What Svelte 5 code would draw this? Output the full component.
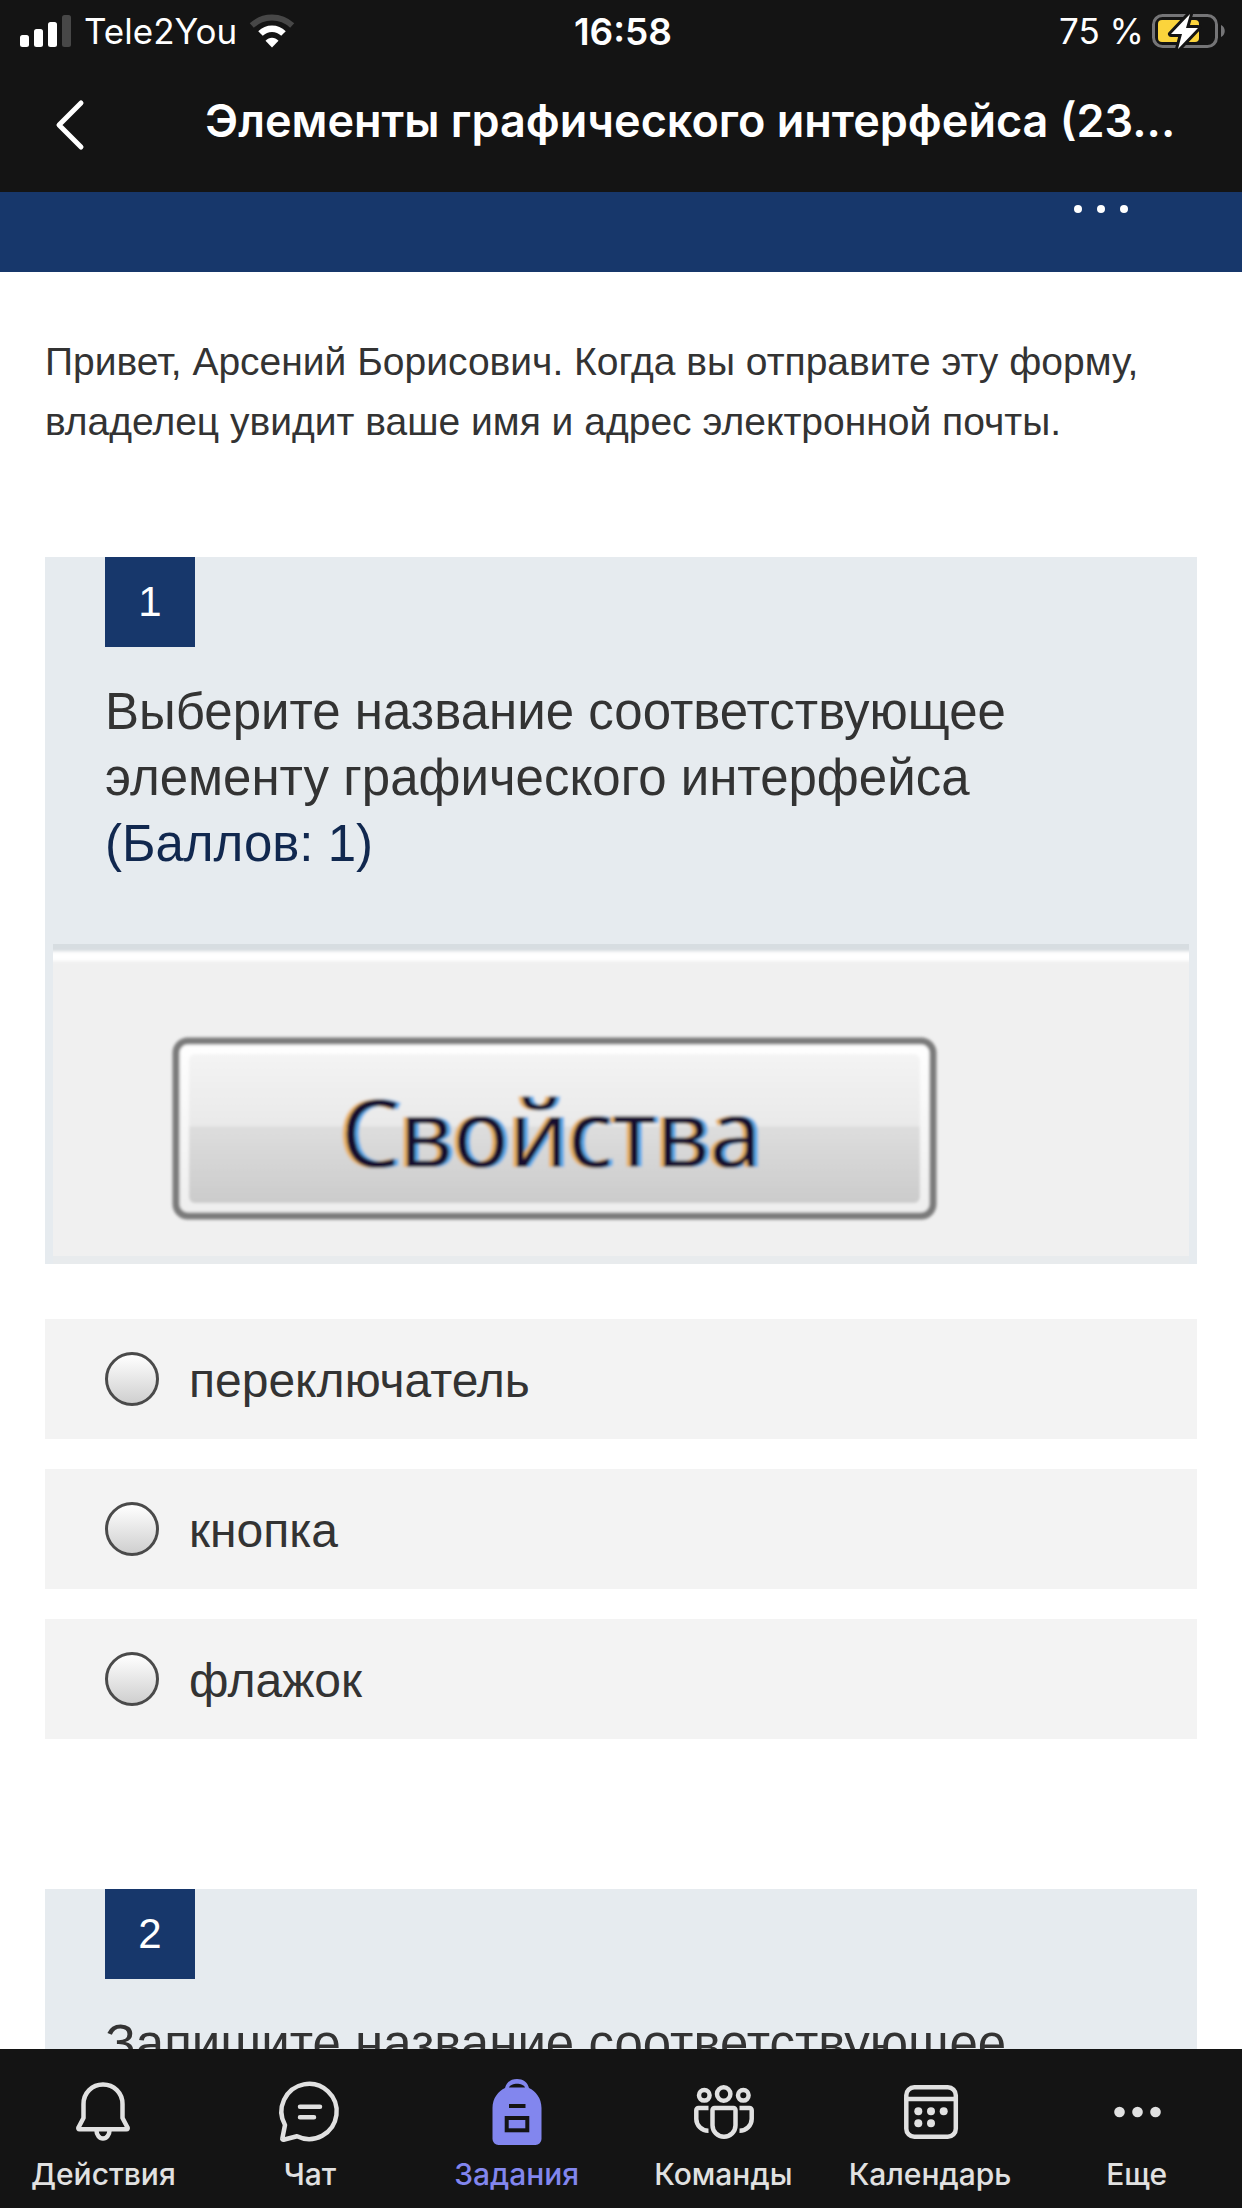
<script lang="ts">
    const options = ['переключатель', 'кнопка', 'флажок'];
    const tabs = [
        { id: 'activity', label: 'Действия' },
        { id: 'chat', label: 'Чат' },
        { id: 'assignments', label: 'Задания' },
        { id: 'teams', label: 'Команды' },
        { id: 'calendar', label: 'Календарь' },
        { id: 'more', label: 'Еще' },
    ];

    let answer = $state('');
    let activeTab = $state('assignments');
</script>

<div class="screen">
    <header class="top">
        <div class="status">
            <div class="carrier">
                <svg width="52" height="34" viewBox="0 0 52 34" fill="#fff" aria-hidden="true">
                    <rect x="0" y="21" width="9" height="12" rx="2.5" />
                    <rect x="14" y="15" width="9" height="18" rx="2.5" />
                    <rect x="28" y="8" width="9" height="25" rx="2.5" />
                    <rect x="42" y="1" width="9" height="32" rx="2.5" fill="#474747" />
                </svg>
                <span>Tele2You</span>
                <svg width="46" height="34" viewBox="0 0 46 34" aria-hidden="true">
                    <path d="M23 33.500l-6.500-6.700c3.600-4 9.400-4 13 0z" fill="#fff" />
                    <path d="M11.500 19.500c6.500-6.300 16.500-6.300 23 0" fill="none" stroke="#fff" stroke-width="6.500" />
                    <path d="M2.800 11.500c11.500-10.700 28.900-10.700 40.400 0" fill="none" stroke="#474747" stroke-width="6" />
                </svg>
            </div>
            <span class="time">16:58</span>
            <div class="power">
                <span>75 %</span>
                <svg width="74" height="38" viewBox="0 0 74 38" aria-hidden="true">
                    <rect x="1.500" y="3.500" width="63" height="31" rx="9" fill="none" stroke="#757577" stroke-width="3" />
                    <path d="M69 13c5 2 5 10 0 12z" fill="#757577" />
                    <rect x="6" y="8" width="41" height="22" rx="4" fill="#fbd43c" />
                    <path d="M38 2L19 22h11l-4 15 20-21H34z" fill="#fff" stroke="#141414" stroke-width="6" paint-order="stroke" stroke-linejoin="round" />
                </svg>
            </div>
        </div>
        <div class="titlebar">
            <button class="back" aria-label="Назад">
                <svg width="30" height="52" viewBox="0 0 30 52" fill="none" stroke="#fff" stroke-width="5" stroke-linecap="round" stroke-linejoin="round">
                    <path d="M26 4L4 26l22 22" />
                </svg>
            </button>
            <h1>Элементы графического интерфейса (23...</h1>
        </div>
    </header>

    <main>
        <div class="banner">
            <button class="dots" aria-label="Дополнительно">
                <svg width="54" height="8" viewBox="0 0 54 8" fill="#fff">
                    <circle cx="4" cy="4" r="4" />
                    <circle cx="27" cy="4" r="4" />
                    <circle cx="50" cy="4" r="4" />
                </svg>
            </button>
        </div>

        <div class="form">
            <p class="intro">
                Привет, Арсений Борисович. Когда вы отправите эту форму, владелец увидит ваше имя и адрес электронной почты.
            </p>

            <section class="question">
                <div class="card">
                    <span class="number">1</span>
                    <h2 id="q1">
                        Выберите название соответствующее элементу графического интерфейса
                        <span class="points">(Баллов: 1)</span>
                    </h2>
                    <svg class="picture" viewBox="0 0 1136 320" role="img" aria-label="Свойства">
                        <defs>
                            <linearGradient id="face" x1="0" y1="0" x2="0" y2="1">
                                <stop offset="0" stop-color="#f4f4f4" />
                                <stop offset=".48" stop-color="#e9e9e9" />
                                <stop offset=".49" stop-color="#dddddd" />
                                <stop offset="1" stop-color="#cbcbcb" />
                            </linearGradient>
                            <linearGradient id="rim" x1="0" y1="0" x2="0" y2="1">
                                <stop offset="0" stop-color="#ffffff" />
                                <stop offset="1" stop-color="#eeeeee" />
                            </linearGradient>
                            <filter id="soft">
                                <feGaussianBlur stdDeviation="1.500" />
                            </filter>
                        </defs>
                        <rect width="1136" height="312" fill="#f0f0f0" />
                        <rect y="312" width="1136" height="8" fill="#e8ebed" />
                        <g filter="url(#soft)">
                            <rect x="-10" y="-10" width="1156" height="17" fill="#d7dde1" />
                            <rect x="-10" y="8" width="1156" height="9" fill="#fff" />
                            <rect x="123" y="97" width="757" height="175" rx="12" fill="url(#rim)" stroke="#7a7a7a" stroke-width="7" />
                            <rect x="136" y="110" width="731" height="149" rx="6" fill="url(#face)" />
                            <text class="caption" x="288" y="223">Свойства</text>
                        </g>
                    </svg>
                </div>

                <div class="options" role="radiogroup" aria-labelledby="q1">
                    {#each options as option}
                        <label class="option">
                            <input type="radio" name="q1" value={option} bind:group={answer} />
                            <span>{option}</span>
                        </label>
                    {/each}
                </div>
            </section>

            <section class="question">
                <div class="card">
                    <span class="number">2</span>
                    <h2>Запишите название соответствующее</h2>
                </div>
            </section>
        </div>
    </main>

    <nav class="tabs">
        {#each tabs as tab}
            <button class="tab" class:active={tab.id === activeTab} onclick={() => (activeTab = tab.id)}>
                <svg width="72" height="72" viewBox="0 0 72 72" fill="none" stroke="currentColor" stroke-width="4.500" stroke-linecap="round" stroke-linejoin="round" aria-hidden="true">
                    {#if tab.id === 'activity'}
                        <path d="M36 8.500c-11 0-19.500 8.500-19.500 19.500v14l-5 9.500c-.6 1 0 1.800 1 1.800h47c1 0 1.600-.8 1-1.800l-5-9.500V28c0-11-8.500-19.500-19.500-19.500z" />
                        <path d="M29.500 54.500a6.500 8 0 0 0 13 0" />
                    {:else if tab.id === 'chat'}
                        <path d="M23 60.300L9.500 63.800a1 1 0 0 1-1.200-1.200L11 49A27.600 27.600 0 1 1 23 60.300z" />
                        <path d="M26 30.700h20M26 41.300h14" />
                    {:else if tab.id === 'assignments'}
                        <path d="M11.500 32c0-10 6-17 12.500-20 1.500-6 6-9 12-9s10.500 3 12 9c6.500 3 12.500 10 12.500 20v31a6 6 0 0 1-6 6h-37a6 6 0 0 1-6-6z" fill="currentColor" stroke="none" />
                        <path d="M28 11.500c2-5 14-5 16 0z" fill="#141414" stroke="none" />
                        <path d="M28 30h16.500" stroke="#141414" stroke-width="4" stroke-linecap="butt" />
                        <rect x="25.700" y="42" width="20.600" height="12.300" stroke="#141414" stroke-width="4" stroke-linejoin="miter" />
                    {:else if tab.id === 'teams'}
                        <circle cx="36.700" cy="18" r="6.700" />
                        <circle cx="17.300" cy="19.300" r="5.300" />
                        <circle cx="56.300" cy="19.300" r="5.300" />
                        <path d="M27.500 32h19a2 2 0 0 1 2 2v15.300a11.500 11.500 0 0 1-23 0V34a2 2 0 0 1 2-2z" />
                        <path d="M21.500 32h-10a2.200 2.200 0 0 0-2.200 2.200V43a12 12 0 0 0 12.200 11.800M52.500 32h10a2.200 2.200 0 0 1 2.200 2.200V43a12 12 0 0 1-12.200 11.800" stroke-linecap="butt" />
                    {:else if tab.id === 'calendar'}
                        <rect x="12.300" y="11.300" width="49.500" height="49.500" rx="8" />
                        <path d="M12.300 23h49.500" />
                        <g fill="currentColor" stroke="none">
                            <circle cx="24.300" cy="35.300" r="4" />
                            <circle cx="37" cy="35.300" r="4" />
                            <circle cx="49.700" cy="35.300" r="4" />
                            <circle cx="24.300" cy="47.300" r="4" />
                            <circle cx="37" cy="47.300" r="4" />
                        </g>
                    {:else}
                        <g fill="currentColor" stroke="none">
                            <circle cx="18.500" cy="36" r="5.300" />
                            <circle cx="36.500" cy="36" r="5.300" />
                            <circle cx="54.500" cy="36" r="5.300" />
                        </g>
                    {/if}
                </svg>
                <span>{tab.label}</span>
            </button>
        {/each}
    </nav>
</div>

<style>
    :global(body) {
        margin: 0;
        background: #fff;
    }
    .screen {
        display: flex;
        flex-direction: column;
        height: 100vh;
        font-family: 'Liberation Sans', Arial, sans-serif;
        color: #333;
    }
    button {
        border: 0;
        padding: 0;
        background: none;
        color: inherit;
        font: inherit;
        cursor: pointer;
    }
    svg {
        display: block;
        flex: none;
    }
    h1,
    h2,
    p {
        margin: 0;
        font-weight: 400;
    }

    .top {
        flex: none;
        background: #141414;
        color: #fff;
        font-family: Inter, sans-serif;
    }
    .status {
        display: grid;
        grid-template-columns: 1fr auto 1fr;
        align-items: center;
        height: 62px;
        padding: 0 16px 0 20px;
        font-size: 35px;
    }
    .carrier,
    .power {
        display: flex;
        align-items: center;
        gap: 12px;
    }
    .power {
        justify-content: flex-end;
        gap: 8px;
    }
    .time {
        font-size: 37px;
        font-weight: 600;
    }
    .titlebar {
        display: flex;
        align-items: center;
        height: 130px;
        padding: 0 55px 4px;
        box-sizing: border-box;
    }
    .back {
        display: flex;
        width: 150px;
    }
    h1 {
        flex: 1;
        padding-bottom: 8px;
        overflow: hidden;
        font-size: 45px;
        font-weight: 600;
        line-height: 56px;
        white-space: nowrap;
    }

    main {
        flex: 1;
        min-height: 0;
        overflow: hidden;
    }
    .banner {
        display: flex;
        justify-content: flex-end;
        align-items: flex-start;
        height: 80px;
        padding: 0 114px;
        box-sizing: border-box;
        background: #17376b;
    }
    .dots {
        padding-top: 13px;
    }
    .form {
        padding: 60px 45px;
    }
    .intro {
        font-size: 39px;
        line-height: 60px;
    }
    .question {
        padding-top: 105px;
    }
    .question + .question {
        padding-top: 150px;
    }
    .card {
        padding: 0 8px;
        background: #e6ebef;
    }
    .number {
        display: flex;
        align-items: center;
        justify-content: center;
        width: 90px;
        height: 90px;
        margin-left: 52px;
        background: #17376b;
        color: #fff;
        font-size: 42px;
    }
    h2 {
        padding: 32px 52px 67px;
        font-size: 51px;
        line-height: 66px;
    }
    .points {
        display: block;
        color: #11284f;
    }
    .picture {
        width: 100%;
        height: auto;
    }
    /* colour fringes of subpixel-smoothed text */
    .caption {
        font-family: 'Open Sans', 'Noto Sans', sans-serif;
        font-size: 93px;
        fill: #12082e;
        filter: drop-shadow(-4px 0 0 #e8b060) drop-shadow(4px 0 0 #58a8e8);
    }
    .options {
        display: flex;
        flex-direction: column;
        gap: 30px;
        padding-top: 55px;
    }
    .option {
        display: flex;
        align-items: center;
        gap: 30px;
        min-height: 120px;
        padding: 0 60px;
        background: #f3f3f3;
        font-size: 48px;
        line-height: 60px;
        cursor: pointer;
    }
    .option span {
        padding-top: 4px;
    }
    .option input {
        flex: none;
        width: 54px;
        height: 54px;
        margin: 0;
        appearance: none;
        border: 3px solid #4a4a4a;
        border-radius: 50%;
        background: linear-gradient(#fff, #cfcfcf) padding-box;
    }
    .option input:checked {
        background: radial-gradient(#17376b 45%, #fff 50%) padding-box;
    }

    .tabs {
        display: flex;
        flex: none;
        padding-right: 2px;
        background: #141414;
        color: #e1e1e1;
        font-family: Inter, sans-serif;
    }
    .tab {
        display: flex;
        flex: 1 1 0;
        flex-direction: column;
        align-items: center;
        gap: 8px;
        min-width: 0;
        padding: 27px 0 16px;
        font-size: 30px;
        font-weight: 500;
        line-height: 36px;
    }
    .tab.active {
        color: #8286ee;
    }
</style>
